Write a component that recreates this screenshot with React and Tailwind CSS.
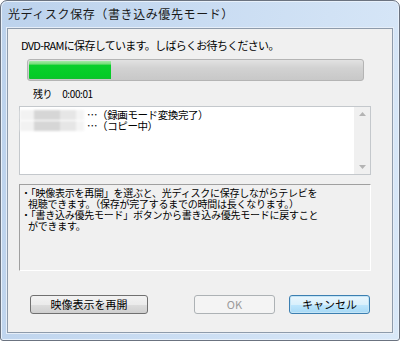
import React from 'react'

const font = { fontFamily: '"Noto Sans CJK JP", "Noto Sans", sans-serif' }

// Blurred (masked) file name in the list
const MaskedName = () => (
  <div className="w-[64px] h-[10px] flex blur-[1px]">
    <div className="w-[14px] bg-[#f2f2f2]" />
    <div className="w-[26px] bg-[#d6d6d6]" />
    <div className="w-[16px] bg-[#e6e6e6]" />
    <div className="w-[8px] bg-[#f4f4f4]" />
  </div>
)

const Button = ({ children, variant = 'normal', className = '' }) => {
  const styles = {
    normal:
      'border-[#707070] bg-[linear-gradient(#f2f2f2_0%,#ebebeb_50%,#dddddd_51%,#cfcfcf_100%)] text-black',
    disabled: 'border-[#adb2b5] bg-[#f4f4f4] text-[#9a9a9a]',
    default:
      'border-[#3c7fb1] bg-[linear-gradient(#eaf6fd_0%,#d9f0fc_50%,#bee6fd_51%,#a7d9f5_100%)] text-black shadow-[inset_0_0_0_1px_#c4e5f6]'
  }
  return (
    <div
      className={`h-[19px] rounded-[3px] border flex items-center justify-center text-[11px] leading-none ${styles[variant]} ${className}`}
    >
      {children}
    </div>
  )
}

export default function App() {
  return (
    <div style={font} className="w-[400px] h-[341px] bg-white">
      {/* Window frame */}
      <div className="w-[400px] h-[341px] rounded-t-[7px] rounded-b-[3px] border border-[#6b7380] bg-[linear-gradient(100deg,#bcd2ec_0%,#c9dcf2_45%,#d9e8f8_100%)] shadow-[inset_0_0_0_1px_#e8f1fb] pt-[27px] pl-[6px] pr-[6px] pb-[7px] flex flex-col">
        {/* Title */}
        <div className="absolute top-0 left-0 pl-[8px] h-[28px] flex items-center text-[12px] tracking-[0.6px] text-[#1a1a1a]">
          光ディスク保存（書き込み優先モード）
        </div>

        {/* Client area */}
        <div className="flex-1 border border-[#8e9bab] bg-[#f0f0f0] shadow-[0_0_0_1px_#e6eef8] text-black">
          <div className="pl-[13px] pt-[8px] h-[24px] leading-[16px] text-[11px] tracking-[-0.7px]">
            DVD-RAMに保存しています。しばらくお待ちください。
          </div>

          {/* Progress bar */}
          <div className="mt-[6px] ml-[19px] w-[337px] h-[22px] rounded-[3px] border border-[#b4b4b4] bg-[linear-gradient(#e2e2e2_0%,#d2d2d2_40%,#c8c8c8_100%)] p-[1px]">
            <div className="w-[82px] h-full rounded-l-[1px] bg-[linear-gradient(#a6eaa6_0%,#73dc76_18%,#0bcf2c_22%,#04cc26_80%,#0fc12d_100%)]" />
          </div>

          <div className="mt-[5px] pl-[25px] h-[14px] flex items-center text-[10px] tracking-[-0.4px]">
            <span>残り</span>
            <span className="ml-[10px]">0:00:01</span>
          </div>

          {/* List box */}
          <div className="mt-[6px] ml-[11px] w-[352px] h-[69px] border border-[#c4c8cc] bg-white flex">
            <div className="flex-1 pt-[2px] text-[10.5px] leading-[11px] tracking-[-0.4px]">
              <div className="flex items-center h-[11px]">
                <MaskedName />
                <span className="ml-[3px] leading-[11px]">…（録画モード変換完了）</span>
              </div>
              <div className="flex items-center h-[11px]">
                <MaskedName />
                <span className="ml-[3px] leading-[11px]">…（コピー中）</span>
              </div>
            </div>
            <div className="w-[16px] bg-[#f0f0f0] flex flex-col items-center justify-between py-[5px]">
              <svg width="7" height="4" viewBox="0 0 7 4">
                <path d="M0 4 L3.5 0 L7 4 Z" fill="#b4b4b4" />
              </svg>
              <svg width="7" height="4" viewBox="0 0 7 4">
                <path d="M0 0 L3.5 4 L7 0 Z" fill="#b4b4b4" />
              </svg>
            </div>
          </div>

          {/* Info box */}
          <div className="mt-[9px] ml-[11px] w-[352px] h-[87px] border border-t-[#a0a0a0] border-l-[#a0a0a0] border-r-white border-b-white pt-[2px] pl-[1px] text-[10px] leading-[11px] tracking-[-0.25px]">
            <div className="h-[11px]">・「映像表示を再開」を選ぶと、光ディスクに保存しながらテレビを</div>
            <div className="h-[11px] pl-[7px]">視聴できます。（保存が完了するまでの時間は長くなります。）</div>
            <div className="h-[11px]">・「書き込み優先モード」ボタンから書き込み優先モードに戻すこと</div>
            <div className="h-[11px] pl-[7px]">ができます。</div>
          </div>

          {/* Buttons */}
          <div className="mt-[24px] flex">
            <Button className="ml-[22px] w-[118px]">映像表示を再開</Button>
            <Button variant="disabled" className="ml-[46px] w-[81px]">OK</Button>
            <Button variant="default" className="ml-[14px] w-[81px]">キャンセル</Button>
          </div>
        </div>
      </div>
    </div>
  )
}
